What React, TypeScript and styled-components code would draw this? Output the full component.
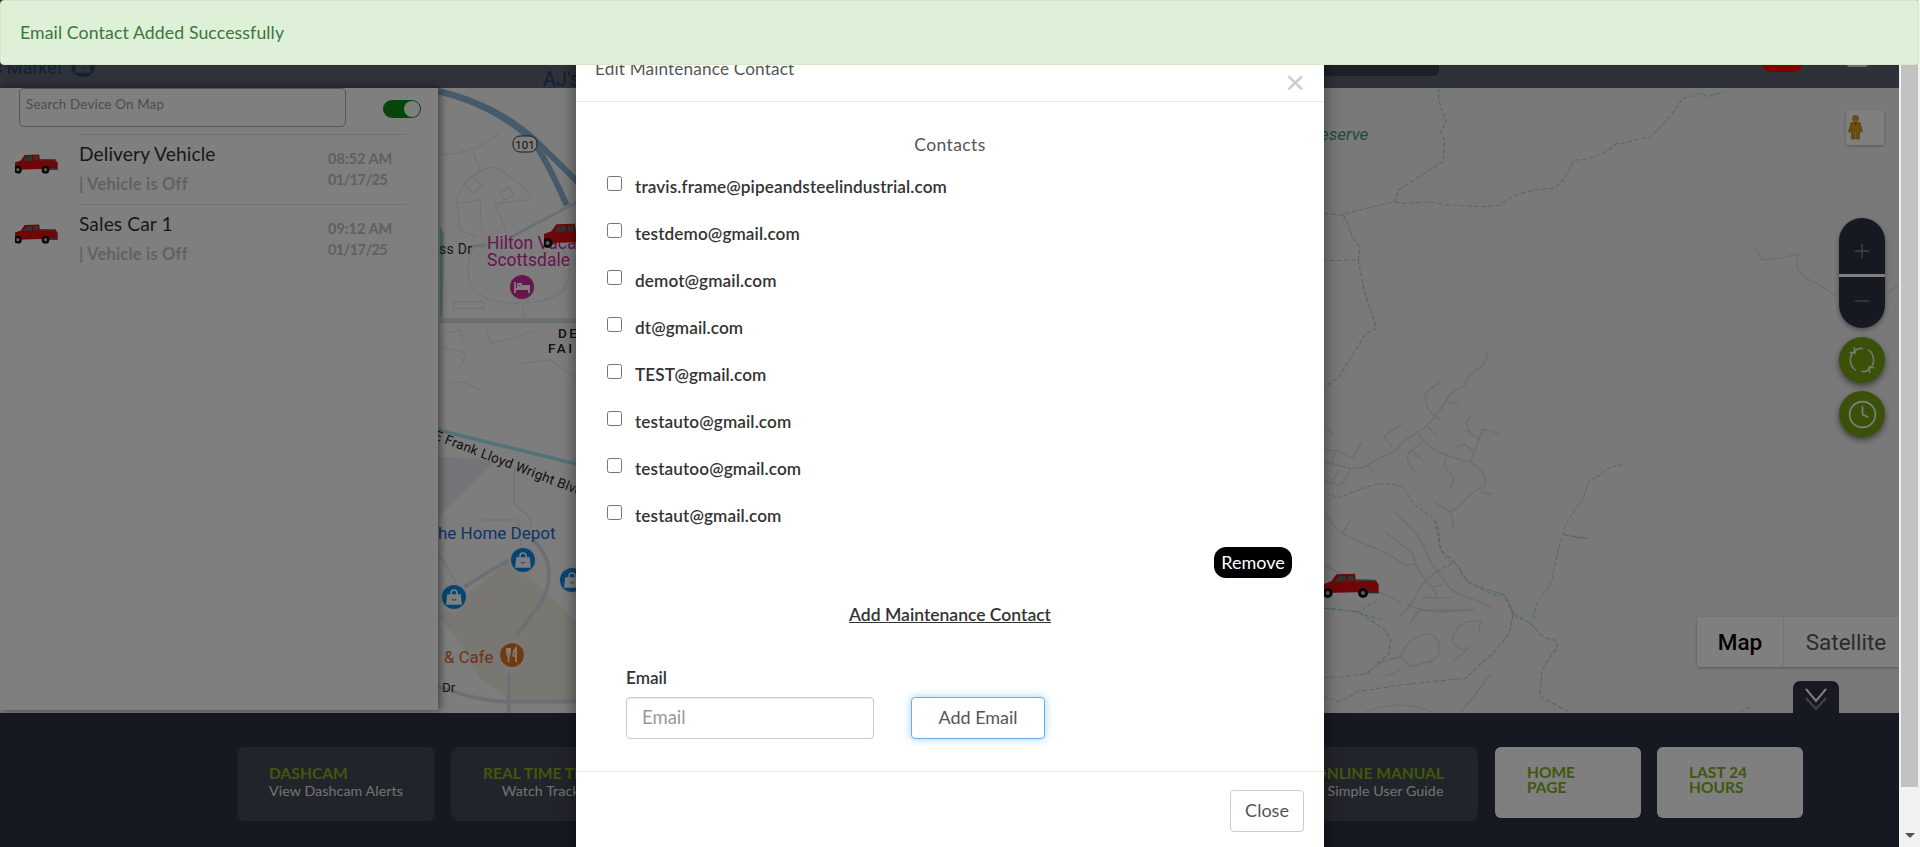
import React from "react";
import styled, { createGlobalStyle } from "styled-components";
import { Clock } from "lucide-react";

const FONT = `"Lato", "Noto Sans", "Liberation Sans", sans-serif`;
const MAPFONT = `Roboto, "Liberation Sans", sans-serif`;

const Global = createGlobalStyle`
  html, body { margin: 0; padding: 0; overflow: hidden; background: #fff; }
  * { box-sizing: border-box; }
`;

const Root = styled.div`
  position: relative; width: 1920px; height: 847px; overflow: hidden; display: flex;
  font-family: ${FONT}; color: #333;
`;
const Page = styled.div`
  position: relative; width: 1899px; height: 847px; display: flex; flex-direction: column; overflow: hidden;
`;
const ScrollTrack = styled.div`
  flex: 1; height: 847px; background: #f1f1f1; display: flex; flex-direction: column; align-items: center;
`;
const ScrollThumb = styled.div`
  width: 17px; height: 787px; background: #c1c1c1; flex: none;
`;
const ScrollArrow = styled.div`
  width: 0; height: 0; margin-top: 46px; border-left: 5px solid transparent; border-right: 5px solid transparent; border-top: 5px solid #505050;
`;

const MapArea = styled.div`
  position: relative; height: 713px; flex: none; display: flex; padding-top: 88px; background: #f3f3f3;
`;
const MapCanvas = styled.svg`
  position: absolute; left: 0; top: 0; width: 1899px; height: 713px;
`;
const HeaderBar = styled.div`
  position: absolute; left: 0; top: 0; right: 0; height: 88px; background: rgba(44, 50, 68, .75);
  display: flex; justify-content: flex-end; align-items: flex-start; padding-right: 31px;
`;
const HeaderPill = styled.div`
  width: 140px; height: 76px; background: #3a414f; border-radius: 0 0 6px 6px; margin-right: 323px;
`;
const HeaderRed = styled.div`
  width: 41px; height: 72px; background: #f00; border-radius: 0 0 9px 9px; margin-right: 44px;
`;
const HeaderWhite = styled.div`
  width: 21px; height: 67px; background: #ddd; border-radius: 0 0 3px 3px;
`;

const Sidebar = styled.aside`
  position: relative; width: 438px; height: 622px; background: #fff; flex: none; box-shadow: 2px 0 8px rgba(0,0,0,.5);
`;
const SearchRow = styled.div`
  display: flex; padding-left: 19px; height: 46px;
`;
const SearchBox = styled.div`
  width: 327px; height: 39px; border: 1px solid #aaa; border-radius: 5px; padding: 6px 6px;
  font-size: 13.3px; line-height: 18px; color: #999; letter-spacing: .22px;
`;
const Toggle = styled.div`
  position: relative; width: 38px; height: 18px; margin: 12px 0 0 37px; border-radius: 9px; background: #0c8a16;
`;
const Knob = styled.div`
  position: absolute; right: 1px; top: 1px; width: 16px; height: 16px; border-radius: 50%; background: #fff;
`;
const VehicleRow = styled.div`
  display: flex; height: 70px; padding: 0 32px 0 15px;
`;
const CarSlot = styled.div`
  width: 43px; height: 18px; margin: 20px 20px 0 0; flex: none;
`;
const VehicleInfo = styled.div`
  flex: 1; display: flex; border-top: 1px solid #e2e2e2; padding-left: 1px; justify-content: space-between;
`;
const VehicleName = styled.div`
  font-size: 19.2px; line-height: 24px; margin-top: 7px; color: #333; letter-spacing: .1px;
`;
const VehicleStatus = styled.div`
  font-size: 16.5px; line-height: 22px; margin-top: 7px; font-weight: 700; color: #c4c4c4; letter-spacing: .2px;
`;
const VehicleTime = styled.div`
  width: 78px; padding-top: 13px; font-size: 14.5px; line-height: 21px; font-weight: 700; color: #c0c0c0;
`;
const VehicleDate = styled.div`
  letter-spacing: -.6px;
`;

const Rail = styled.div`
  position: relative; flex: 1; display: flex; flex-direction: column; align-items: flex-end; padding: 22px 15px 0 0;
`;
const Pegman = styled.div`
  width: 38px; height: 35px; background: #fff; border-radius: 2px; box-shadow: 0 1px 3px rgba(0,0,0,.3); padding: 5px 0 0 2px; flex: none;
`;
const ZoomStack = styled.div`
  width: 46px; height: 110px; margin: 73px -1px 0 0; border-radius: 23px; background: #2c3244; flex: none;
  display: flex; flex-direction: column; box-shadow: 0 2px 5px rgba(0,0,0,.4); overflow: hidden;
`;
const ZoomBtn = styled.div<{ $top?: boolean }>`
  flex: 1; display: flex; align-items: center; justify-content: center; color: #cfd2d8;
  ${(p) => (p.$top ? "border-bottom: 3px solid #fff; padding-top: 9px;" : "padding-bottom: 4px;")}
`;
const RoundBtn = styled.div<{ $first?: boolean }>`
  width: 46px; height: 46px; margin: ${(p) => (p.$first ? "9px" : "8px")} -1px 0 0; border-radius: 50%; background: #76a012; flex: none;
  display: flex; align-items: center; justify-content: center; color: #fff; box-shadow: 0 3px 6px rgba(0,0,0,.5);
`;
const MapType = styled.div`
  margin: auto -15px 0 0; width: 202px; height: 50px; background: #fff; border-radius: 2px 0 0 2px; display: flex;
  box-shadow: 0 1px 3px rgba(0,0,0,.3); font-family: ${MAPFONT}; font-size: 22.5px; flex: none;
`;
const MapTypeBtn = styled.div<{ $on?: boolean }>`
  display: flex; align-items: center; justify-content: center; height: 50px;
  width: ${(p) => (p.$on ? "87px" : "115px")};
  font-weight: ${(p) => (p.$on ? 500 : 400)};
  color: ${(p) => (p.$on ? "#000" : "#565656")};
  ${(p) => (p.$on ? "border-right: 1px solid #e6e6e6;" : "padding-left: 9px;")}
`;
const CollapseTab = styled.div`
  width: 46px; height: 32px; margin: 14px 45px 0 0; background: #2c3244; border-radius: 7px 7px 0 0; flex: none;
  display: flex; justify-content: center; padding-top: 7px;
`;

const BottomBar = styled.div`
  height: 134px; flex: none; background: #2c3244; display: flex; align-items: flex-start; gap: 16px; padding: 34px 96px 0 237px;
`;
const InfoCard = styled.div<{ $center?: boolean; $push?: boolean }>`
  width: 198px; height: 74px; background: #424854; border-radius: 8px; padding: 17px 32px 0; flex: none;
  text-align: ${(p) => (p.$center ? "center" : "left")};
  white-space: nowrap;
  margin-left: ${(p) => (p.$push ? "auto" : "0")};
  margin-right: ${(p) => (p.$push ? "1px" : "0")};
`;
const CardTitle = styled.div`
  font-size: 15.6px; line-height: 18px; color: #82ae1a; font-weight: 700;
`;
const CardSub = styled.div`
  font-size: 14.2px; line-height: 17px; color: #e2e2e2; letter-spacing: .1px;
`;
const LinkCard = styled.div`
  width: 146px; height: 71px; background: #fff; border-radius: 6px; padding: 18px 0 0 32px; flex: none;
  font-size: 15.5px; line-height: 15px; color: #82ae1a; font-weight: 700;
`;

const Backdrop = styled.div`
  position: absolute; inset: 0; background: rgba(0, 0, 0, .5);
`;
const Modal = styled.div`
  position: absolute; left: 576px; top: 30px; width: 748px; height: 830px; background: #fff;
  box-shadow: 0 5px 15px rgba(0, 0, 0, .5); display: flex; flex-direction: column;
`;
const ModalHeader = styled.div`
  height: 72px; flex: none; border-bottom: 1px solid #e5e5e5; display: flex; justify-content: space-between; padding: 28px 19px 0 19px;
`;
const ModalTitle = styled.div`
  font-size: 17.2px; line-height: 22px; color: #555; letter-spacing: .15px;
`;
const CloseX = styled.div`
  font-size: 34px; line-height: 26px; margin-top: 11px; color: #ccc; font-family: "Liberation Sans", sans-serif;
`;
const ModalBody = styled.div`
  padding: 32px 32px 0 31px; display: flex; flex-direction: column;
`;
const Contacts = styled.div`
  font-size: 17.5px; line-height: 22px; text-align: center; color: #555; margin-bottom: 7px; padding-left: 1px; letter-spacing: .4px;
`;
const ContactRow = styled.label`
  height: 47px; display: flex; align-items: center; gap: 13px; padding-bottom: 1px;
  font-size: 17.2px; font-weight: 600; color: #333; letter-spacing: .1px;
`;
const Check = styled.input`
  width: 15px; height: 15px; margin: 0 0 6px 0; flex: none;
`;
const RemoveRow = styled.div`
  display: flex; justify-content: flex-end; margin-top: 8px;
`;
const RemoveBtn = styled.button`
  width: 78px; height: 31px; border: 0; border-radius: 12px; background: #000; color: #fff; font-family: ${FONT};
  font-size: 18px; padding: 0 0 2px;
`;
const SectionLink = styled.div`
  margin-top: 26px; font-size: 17.5px; line-height: 22px; font-weight: 600; text-decoration: underline; text-align: center; color: #333; padding-left: 1px;
`;
const EmailLabel = styled.div`
  margin: 41px 0 8px 19px; font-size: 17.2px; line-height: 22px; font-weight: 600; color: #333;
`;
const EmailRow = styled.div`
  display: flex; gap: 37px; padding-left: 19px;
`;
const EmailInput = styled.input`
  width: 248px; height: 42px; border: 1px solid #ccc; border-radius: 4px; padding: 0 15px 2px; font-family: ${FONT}; font-size: 18.5px;
  box-shadow: inset 0 1px 1px rgba(0,0,0,.075);
  &::placeholder { color: #999; }
`;
const AddBtn = styled.button`
  width: 134px; height: 42px; background: #fff; border: 1px solid #66afe9; border-radius: 4px; font-family: ${FONT}; font-size: 18px; color: #555;
  box-shadow: 0 0 8px rgba(102, 175, 233, .6); padding: 0 0 2px;
`;
const ModalFooter = styled.div`
  margin-top: 32px; border-top: 1px solid #e5e5e5; padding: 18px 20px 0 0; display: flex; justify-content: flex-end;
`;
const CloseBtn = styled.button`
  width: 74px; height: 42px; background: #fff; border: 1px solid #ccc; border-radius: 4px; font-family: ${FONT}; font-size: 18px; color: #555; padding: 0 0 2px;
`;
const Toast = styled.div`
  position: absolute; left: 0; top: 0; width: 1919px; height: 65px; background: #dff0d8; border: 1px solid #d6e9c6; border-radius: 4px;
  color: #3c763d; font-size: 17.7px; display: flex; align-items: center; padding: 0 0 1px 19px; letter-spacing: .1px;
`;

function Car({ width = 43, x, y }: { width?: number; x?: number; y?: number }) {
  return (
    <svg x={x} y={y} width={width} height={(width * 75) / 165} viewBox="0 0 165 75" style={{ display: "block" }}>
      <path d="M0 33 L22 25 L37 4 L93 2 L95 20 L155 21 L164 35 L164 56 L0 60 Z" fill="#dc0f0f" />
      <path d="M43 10 L65 8 L65 25 L32 27 Z M72 8 L88 8 L88 25 L72 25 Z" fill="#666" />
      <path d="M95 19 L155 20 L158 25 L95 24 Z" fill="#777" />
      <path d="M125 55 H165 V61 H125 Z" fill="#555" />
      <circle cx="11" cy="60" r="15" fill="#111" />
      <circle cx="11" cy="60" r="6" fill="#bbb" />
      <circle cx="117" cy="60" r="15" fill="#111" />
      <circle cx="117" cy="60" r="6" fill="#bbb" />
    </svg>
  );
}

function Pin({ x, y, color, kind }: { x: number; y: number; color: string; kind: "bed" | "bag" | "food" }) {
  return (
    <g transform={`translate(${x} ${y})`}>
      <path d="M0 19 C-4 15 -14 10 -14 0 A14 14 0 1 1 14 0 C14 10 4 15 0 19 Z" fill="#f5f5f5" />
      <circle r="12" fill={color} />
      {kind === "bed" && <path d="M-7 -5 V6 M7 0 V6 M-7 2 H7 M-4 -3 H-1 V0 H-4 Z M1 -1 H7 V1 H1 Z" stroke="#fff" strokeWidth="1.8" fill="none" />}
      {kind === "bag" && (
        <g fill="none" stroke="#fff" strokeWidth="1.6">
          <path d="M-6 -2 H6 L7 7 H-7 Z" fill="#fff" />
          <path d="M-3 -2 V-4 A3 3 0 0 1 3 -4 V-2" />
          <path d="M-2 2 Q0 4.5 2 2" stroke={color} strokeWidth="1.2" />
        </g>
      )}
      {kind === "food" && <path d="M-5 -7 V-2 Q-5 0 -3.5 0 V7 M-2 -7 V-2 Q-2 0 -3.5 0 M-3.5 -7 V-2 M4 7 V-7 Q1 -4 1.5 1 H4" stroke="#fff" strokeWidth="1.7" fill="none" />}
    </g>
  );
}

const ROADS1 = [
  "M490 68 C490 100 470 110 450 125 C430 140 425 160 420 168 C390 175 375 190 365 215 C350 240 335 260 300 295 C270 310 245 325 215 360 C190 380 160 380 130 408 C110 415 90 415 78 415 L0 395",
  "M348 158 C325 170 310 185 303 195 C305 230 320 250 335 262 L354 272",
  "M366 217 L405 220", "M310 290 L340 318",
  "M285 308 C300 350 350 375 440 397 C480 420 495 450 480 470 C445 485 425 500 410 525 C395 540 385 545 375 542 C360 535 345 520 332 520",
  "M375 542 C385 560 390 575 387 595", "M468 487 L505 492",
  "M365 385 C355 410 370 425 388 438 C390 450 385 465 378 477",
  "M438 397 L478 297 L523 310", "M478 297 L462 328 L437 305 L418 300", "M437 305 L425 275 L445 255",
  "M400 350 L422 343 L447 362",
  "M296 335 L262 362 C245 375 245 395 270 423", "M262 362 L303 397", "M233 283 L180 318 L205 352",
  "M0 292 L35 317", "M113 337 L85 385 L35 362 L0 360", "M35 362 L22 395",
  "M78 415 C70 450 50 465 45 465 L0 452", "M47 420 L25 450", "M130 408 L153 424",
  "M0 545 C20 570 25 590 55 610 C110 640 160 655 180 665 L245 705 L275 703", "M77 575 L55 610",
  "M185 607 L265 668 C275 700 280 720 300 745 L335 785 L335 805",
  "M208 545 C250 580 290 620 305 660 C320 700 345 735 375 770 C390 795 430 795 505 835",
  "M338 725 C300 755 285 770 265 820 L225 865", "M250 822 C310 860 390 840 450 840",
  "M295 800 C320 805 370 808 390 800", "M330 770 L358 765", "M0 705 L70 740 L235 820", "M285 840 L265 870",
];
const TRAILS1 = [
  "M5 490 C30 495 40 510 60 498 C100 480 130 470 150 465 C180 460 210 462 220 465 C240 470 250 490 260 510 C280 540 320 550 335 575 C350 600 345 640 350 660 C360 680 375 695 385 700 C405 700 410 730 420 745 C450 765 490 790 520 798 L535 790 C550 800 565 830 565 855 L595 870",
  "M385 700 L338 725",
  "M897 405 C870 405 840 420 825 438 C800 450 790 450 787 480 C775 520 745 550 730 575 C715 620 700 660 685 745 C670 785 645 800 635 830 L628 868",
  "M722 615 C740 615 765 630 795 625", "M5 835 L60 840 L100 848 L160 810", "M105 850 L170 868",
];
const TRAILS_TOP = [
  "M310 265 L310 300 L330 365 L315 395 L325 420 L322 485 L265 525 L205 570 L195 605 L105 630 L55 645 L10 640",
  "M195 605 C230 620 260 595 330 615 C380 615 420 625 470 615 C500 590 525 570 610 565 C640 545 650 510 665 480 C700 480 745 465 775 430 C800 435 830 410 860 415 C900 370 940 320 945 295 C975 295 995 265 1010 290 L1060 275",
  "M60 645 C85 690 75 710 105 740 L100 780 L10 782",
  "M100 780 L115 870 L148 985 L120 1000 L50 1130 L10 1165",
];
const TRAILS_LOW = [
  "M640 285 L700 295",
  "M10 505 L100 515 L170 570 L185 600 L180 640 L125 700 L50 712 L10 712",
  "M300 240 L315 330 L355 370 L390 430 L480 465 L505 520 L495 580 L460 630 L380 715 L210 735 L100 755 L50 785 L10 770",
  "M505 520 L550 550", "M550 550 C580 590 590 600 615 600 L620 620 L580 690 L575 770 L650 815", "M1095 815 L1130 800",
];
const ROADS_LOW = [
  "M120 700 C160 660 190 655 210 650 C225 610 240 590 280 580 C320 590 330 650 280 670",
  "M345 605 C350 560 380 535 420 545 L415 575", "M345 605 C365 640 390 630 390 620 L350 665",
  "M210 650 L240 680 L295 660", "M170 710 L210 690", "M235 550 L260 510 L400 510",
  "M120 815 C180 790 240 790 290 815", "M370 815 L445 705",
];
const ROADS_TOP = [
  "M1140 750 L1155 780 L1200 775 L1250 762 C1240 810 1250 830 1300 850 L1350 890", "M1480 880 L1512 855",
];
const ROADS_LEFT = [
  "M0 285 C80 280 150 250 175 218", "M100 280 L120 330", "M270 420 L165 430 L200 520", "M50 420 L60 510 L110 530",
  "M60 430 L120 420 L125 510", "M90 350 L125 375 L100 400 L75 370 Z", "M180 400 L205 380 L222 405 L195 420 Z",
  "M50 420 C60 370 110 330 160 320 C210 340 260 390 270 410",
  "M100 560 C70 640 80 700 160 720 C220 740 330 730 370 690 C400 640 390 590 360 560",
  "M40 725 L130 725 L130 745 L40 745 Z", "M250 700 V780", "M140 800 L150 850 L220 835 L280 810",
  "M250 910 L330 900 L400 950", "M20 820 L60 810 L70 850", "M0 860 L80 880 L60 920", "M30 970 C60 960 90 970 120 990",
];
const ROADS_BOTTOM = ["M1390 200 L1390 310 C1400 330 1440 340 1435 380", "M1300 360 L1400 360 L1410 460", "M1185 460 L1240 560"];

function MapDrawing() {
  return (
    <MapCanvas viewBox="0 0 1899 713">
      <rect x="0" y="0" width="576" height="713" fill="#fbfbfb" />
      <rect x="1324" y="0" width="575" height="713" fill="#f3f3f3" />

      <g transform="translate(0 400) scale(.37 .3333)">
        <path d="M1185 650 L1380 480 L1500 600 L1568 680 L1568 900 L1380 900 L1300 840 L1240 720 Z" fill="#f3eee3" />
        <path d="M1185 170 L1340 180 L1240 290 L1185 350 Z" fill="#e6eaf0" />
        <path d="M1185 90 L1568 195" stroke="#a8e6ef" strokeWidth="11" fill="none" />
        <g stroke="#d9dfe6" fill="none" strokeWidth="11">
          <path d="M1255 560 L1375 480" />
          <path d="M1440 420 C1500 480 1490 560 1460 610 L1395 710" />
          <path d="M1185 860 C1240 880 1300 905 1380 905 L1568 905" />
          <path d="M1375 820 L1375 940" />
        </g>
        <g stroke="#d9dfe6" fill="none" strokeWidth="3">
          {ROADS_BOTTOM.map((d) => <path key={d} d={d} />)}
        </g>
      </g>

      <g transform="translate(440 60) scale(.3333)">
        <path d="M0 500 L12 520 L8 770 L0 770 Z" fill="#9fe3bb" />
        <path d="M-20 90 C110 120 200 170 270 235 C310 280 350 370 380 435" stroke="#8fb5d6" strokeWidth="18" fill="none" />
        <path d="M-20 90 C120 120 220 180 290 245 C330 285 380 330 420 375" stroke="#8fb5d6" strokeWidth="18" fill="none" />
        <path d="M215 530 L385 440 L420 425" stroke="#dde3e9" strokeWidth="10" fill="none" />
        <path d="M90 560 L140 555" stroke="#dde3e9" strokeWidth="10" fill="none" />
        <path d="M0 782 H420" stroke="#d9e0e7" strokeWidth="15" fill="none" />
        <g stroke="#e0e5ea" fill="none" strokeWidth="3.5">
          {ROADS_LEFT.map((d) => <path key={d} d={d} />)}
        </g>
      </g>

      <g transform="translate(1324 330) scale(.3333)" fill="none">
        <g stroke="#d5dde8" strokeWidth="4.5">{ROADS1.map((d) => <path key={d} d={d} />)}</g>
        <g stroke="#a6d2ba" strokeWidth="3" strokeDasharray="13 6">{TRAILS1.map((d) => <path key={d} d={d} />)}</g>
      </g>
      <g transform="translate(1320 0) scale(.3827 .3333)" fill="none">
        <g stroke="#a6d2ba" strokeWidth="3" strokeDasharray="13 6">{TRAILS_TOP.map((d) => <path key={d} d={d} />)}</g>
        <g stroke="#d5dde8" strokeWidth="4">{ROADS_TOP.map((d) => <path key={d} d={d} />)}</g>
      </g>
      <g transform="translate(1320 440) scale(.3827 .3333)" fill="none">
        <g stroke="#a6d2ba" strokeWidth="3" strokeDasharray="13 6">{TRAILS_LOW.map((d) => <path key={d} d={d} />)}</g>
        <g stroke="#d5dde8" strokeWidth="4">{ROADS_LOW.map((d) => <path key={d} d={d} />)}</g>
      </g>

      <g fontFamily={MAPFONT}>
        <text x="-7" y="74" fontSize="18" fill="#1a66d4">s Market</text>
        <text x="543" y="86" fontSize="20" fill="#1a66d4">AJ's</text>
        <g transform="translate(525 144)">
          <rect x="-12" y="-8" width="24" height="16" rx="7" fill="#fff" stroke="#333" strokeWidth="1" />
          <text y="4.5" textAnchor="middle" fontSize="11.5" fill="#222">101</text>
        </g>
        <text x="439" y="254" fontSize="14" fill="#333" letterSpacing=".3">ss Dr</text>
        <text x="487" y="249" fontSize="17.5" fill="#d02a9c">Hilton Vaca</text>
        <text x="487" y="266" fontSize="17.5" fill="#d02a9c">Scottsdale</text>
        <text x="558" y="338" fontSize="13.5" fontWeight="500" fill="#222" letterSpacing="2.5">DE</text>
        <text x="548" y="353" fontSize="13.5" fontWeight="500" fill="#222" letterSpacing="2.5">FAI</text>
        <text x="1320" y="140" fontSize="17" fontStyle="italic" fill="#2f9d72">eserve</text>
        <text x="433" y="439" fontSize="13.5" fill="#222" letterSpacing=".3" transform="rotate(21 433 439)">E Frank Lloyd Wright Blvd</text>
        <text x="438" y="539" fontSize="17" fill="#1a66d4">he Home Depot</text>
        <text x="444" y="663" fontSize="16.5" fill="#d9691a" letterSpacing=".2">&amp; Cafe</text>
        <text x="442" y="692" fontSize="13.5" fill="#333">Dr</text>
      </g>
      <Pin x={83} y={65} color="#1a6fc4" kind="bag" />
      <Pin x={522} y={287} color="#d02a9c" kind="bed" />
      <Pin x={523} y={560} color="#0a8ae6" kind="bag" />
      <Pin x={454} y={597} color="#0a8ae6" kind="bag" />
      <Pin x={572} y={580} color="#0a8ae6" kind="bag" />
      <Pin x={512} y={655} color="#e0781e" kind="food" />
      <Car x={544} y={223} width={55} />
      <Car x={1324} y={573} width={55} />
    </MapCanvas>
  );
}

const EMAILS = [
  "travis.frame@pipeandsteelindustrial.com", "testdemo@gmail.com", "demot@gmail.com", "dt@gmail.com",
  "TEST@gmail.com", "testauto@gmail.com", "testautoo@gmail.com", "testaut@gmail.com",
];
const VEHICLES = [
  { name: "Delivery Vehicle", time: "08:52 AM", date: "01/17/25" },
  { name: "Sales Car 1", time: "09:12 AM", date: "01/17/25" },
];

export default function App() {
  return (
    <Root>
      <Global />
      <Page>
        <MapArea>
          <MapDrawing />
          <HeaderBar>
            <HeaderPill />
            <HeaderRed />
            <HeaderWhite />
          </HeaderBar>
          <Sidebar>
            <SearchRow>
              <SearchBox>Search Device On Map</SearchBox>
              <Toggle><Knob /></Toggle>
            </SearchRow>
            {VEHICLES.map((v) => (
              <VehicleRow key={v.name}>
                <CarSlot><Car /></CarSlot>
                <VehicleInfo>
                  <div>
                    <VehicleName>{v.name}</VehicleName>
                    <VehicleStatus>| Vehicle is Off</VehicleStatus>
                  </div>
                  <VehicleTime>{v.time}<VehicleDate>{v.date}</VehicleDate></VehicleTime>
                </VehicleInfo>
              </VehicleRow>
            ))}
          </Sidebar>
          <Rail>
            <Pegman>
              <svg width="15" height="25" viewBox="0 0 15 25">
                <circle cx="7.5" cy="3.5" r="3.5" fill="#d99a1a" />
                <path d="M3 7.5 H12 L14.5 17 H12.5 L11.5 13 V24 H8 V16 H7 V24 H3.5 V13 L2.5 17 H0.5 Z" fill="#d99a1a" stroke="#a8701a" strokeWidth=".6" />
                <path d="M6 8 L7.5 11 L9 8 Z" fill="#d44" />
              </svg>
            </Pegman>
            <ZoomStack>
              <ZoomBtn $top>
                <svg width="14" height="14" viewBox="0 0 14 14"><path d="M7 0 V14 M0 7 H14" stroke="currentColor" strokeWidth="1.3" opacity=".55" /></svg>
              </ZoomBtn>
              <ZoomBtn>
                <svg width="14" height="4" viewBox="0 0 14 4"><path d="M0 2 H14" stroke="currentColor" strokeWidth="1.3" opacity=".55" /></svg>
              </ZoomBtn>
            </ZoomStack>
            <RoundBtn $first>
              <svg width="26" height="28" viewBox="0 0 30 32" fill="none" stroke="currentColor" strokeWidth="1.9" opacity=".85">
                <path d="M8 28 C1 24 -1 12 6 6 C9 3 13 2 16 3" />
                <path d="M22 4 C29 8 31 20 24 26 C21 29 17 30 14 29" />
                <path d="M6 1 L7 8 L0.5 7" strokeLinejoin="round" />
                <path d="M24 31 L23 24 L29.5 25" strokeLinejoin="round" />
              </svg>
            </RoundBtn>
            <RoundBtn>
              <Clock size={31} strokeWidth={1.3} />
            </RoundBtn>
            <MapType>
              <MapTypeBtn $on>Map</MapTypeBtn>
              <MapTypeBtn>Satellite</MapTypeBtn>
            </MapType>
            <CollapseTab>
              <svg width="22" height="23" viewBox="0 0 22 23" fill="none" strokeWidth="2">
                <path d="M1 10 L11 21 L21 10" stroke="#888" />
                <path d="M1 1 L11 13 L21 1" stroke="#fff" />
              </svg>
            </CollapseTab>
          </Rail>
        </MapArea>
        <BottomBar>
          <InfoCard>
            <CardTitle>DASHCAM</CardTitle>
            <CardSub>View Dashcam Alerts</CardSub>
          </InfoCard>
          <InfoCard $center>
            <CardTitle>REAL TIME TRACKING</CardTitle>
            <CardSub>Watch Trackers</CardSub>
          </InfoCard>
          <InfoCard $center $push>
            <CardTitle>ONLINE MANUAL</CardTitle>
            <CardSub>A Simple User Guide</CardSub>
          </InfoCard>
          <LinkCard>HOME<br />PAGE</LinkCard>
          <LinkCard>LAST 24<br />HOURS</LinkCard>
        </BottomBar>
        <Backdrop />
        <Modal>
          <ModalHeader>
            <ModalTitle>Edit Maintenance Contact</ModalTitle>
            <CloseX>×</CloseX>
          </ModalHeader>
          <ModalBody>
            <Contacts>Contacts</Contacts>
            {EMAILS.map((e) => (
              <ContactRow key={e}>
                <Check type="checkbox" />
                {e}
              </ContactRow>
            ))}
            <RemoveRow><RemoveBtn>Remove</RemoveBtn></RemoveRow>
            <SectionLink>Add Maintenance Contact</SectionLink>
            <EmailLabel>Email</EmailLabel>
            <EmailRow>
              <EmailInput placeholder="Email" />
              <AddBtn>Add Email</AddBtn>
            </EmailRow>
          </ModalBody>
          <ModalFooter>
            <CloseBtn>Close</CloseBtn>
          </ModalFooter>
        </Modal>
      </Page>
      <ScrollTrack>
        <ScrollThumb />
        <ScrollArrow />
      </ScrollTrack>
      <Toast>Email Contact Added Successfully</Toast>
    </Root>
  );
}
